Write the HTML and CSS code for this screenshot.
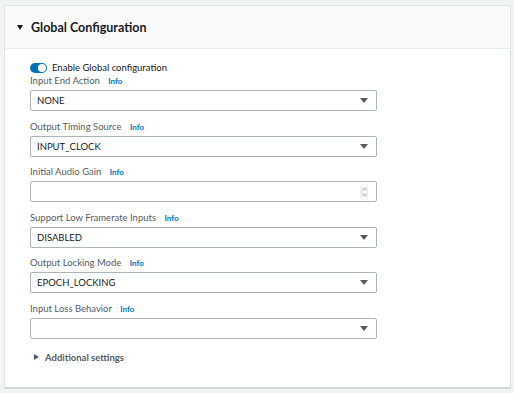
FILE: index.html
```html
<!DOCTYPE html>
<html lang="en">
<head>
    <meta charset="UTF-8">
    <meta name="viewport" content="width=device-width, initial-scale=1.0">
    <title>Global Configuration</title>
    <link rel="stylesheet" href="styles.css">
</head>
<body>

    <!-- Global configuration panel -->
    <section class="panel">
        <div class="panel-header">
            <span class="caret-down"></span>
            <h2>Global Configuration</h2>
        </div>

        <div class="panel-body">
            <div class="toggle-row">
                <span class="toggle"><span class="knob"></span></span>
                <span>Enable Global configuration</span>
            </div>

            <div class="field">
                <label>Input End Action <a class="info">Info</a></label>
                <div class="select">NONE<span class="arrow"></span></div>
            </div>

            <div class="field">
                <label>Output Timing Source <a class="info">Info</a></label>
                <div class="select">INPUT_CLOCK<span class="arrow"></span></div>
            </div>

            <div class="field">
                <label>Initial Audio Gain <a class="info">Info</a></label>
                <div class="select">
                    <span class="spinner">
                        <svg width="7" height="12" viewBox="0 0 7 12"><path d="M1 4.5 L3.5 2 L6 4.5 M1 7.5 L3.5 10 L6 7.5" fill="none" stroke="#9aa0a6" stroke-width="0.9"/></svg>
                    </span>
                </div>
            </div>

            <div class="field">
                <label>Support Low Framerate Inputs <a class="info">Info</a></label>
                <div class="select">DISABLED<span class="arrow"></span></div>
            </div>

            <div class="field">
                <label>Output Locking Mode <a class="info">Info</a></label>
                <div class="select">EPOCH_LOCKING<span class="arrow"></span></div>
            </div>

            <div class="field">
                <label>Input Loss Behavior <a class="info">Info</a></label>
                <div class="select"><span class="arrow"></span></div>
            </div>

            <div class="expander">
                <span class="caret-right"></span>
                Additional settings
            </div>
        </div>
    </section>

</body>
</html>
```

FILE: styles.css
```css
body {
    font-family: Lato, "Open Sans", Arial, sans-serif;
    margin: 0;
    padding: 5px 3px 5px 4px;
    background-color: #f2f3f3;
    color: #16191f;
}

.panel {
    background-color: white;
    border: 1px solid #e1e4e4;
    border-bottom: 2px solid #d5dbdb;
    height: 384px;
    box-sizing: border-box;
}

.panel-header {
    background-color: #fafafa;
    height: 42px;
    display: flex;
    align-items: center;
    padding-left: 12px;
    border-bottom: 1px solid #eaeded;
}

.panel-header h2 {
    margin: 0;
    font-size: 12.5px;
    font-weight: bold;
    color: #16191f;
}

.caret-down {
    width: 0;
    height: 0;
    border-left: 3px solid transparent;
    border-right: 3px solid transparent;
    border-top: 5px solid #16191f;
    margin-right: 8px;
}

.panel-body {
    padding: 12px 0 0 25px;
}

.toggle-row {
    display: flex;
    align-items: center;
    gap: 5px;
    font-size: 9.5px;
    height: 13px;
    color: #16191f;
}

.toggle {
    width: 17px;
    height: 10px;
    border-radius: 6px;
    background-color: #0073bb;
    position: relative;
}

.knob {
    position: absolute;
    right: 1px;
    top: 1px;
    width: 8px;
    height: 8px;
    border-radius: 50%;
    background-color: white;
}

.field {
    margin-top: 1px;
    margin-bottom: 9.5px;
}

.field label {
    display: block;
    font-size: 9.5px;
    line-height: 12px;
    color: #545b64;
    margin-bottom: 3px;
}

.info {
    color: #0073bb;
    font-size: 8px;
    font-weight: bold;
    margin-left: 6px;
}

.select {
    width: 347px;
    height: 21px;
    box-sizing: border-box;
    border: 1px solid #aab7b8;
    border-radius: 2px;
    padding-left: 6px;
    font-size: 9.5px;
    display: flex;
    align-items: center;
    position: relative;
    color: #16191f;
}

.arrow {
    position: absolute;
    right: 8px;
    top: 7px;
    width: 0;
    height: 0;
    border-left: 4px solid transparent;
    border-right: 4px solid transparent;
    border-top: 5px solid #545b64;
}

.spinner {
    position: absolute;
    right: 8px;
    top: 4px;
    width: 8px;
    height: 12px;
    background-color: #f2f3f3;
    display: flex;
    justify-content: center;
}

.expander {
    display: flex;
    align-items: center;
    gap: 6px;
    font-size: 9.5px;
    font-weight: bold;
    color: #545b64;
    margin-top: 13px;
    padding-left: 4px;
}

.caret-right {
    width: 0;
    height: 0;
    border-top: 3px solid transparent;
    border-bottom: 3px solid transparent;
    border-left: 5px solid #545b64;
}
```
